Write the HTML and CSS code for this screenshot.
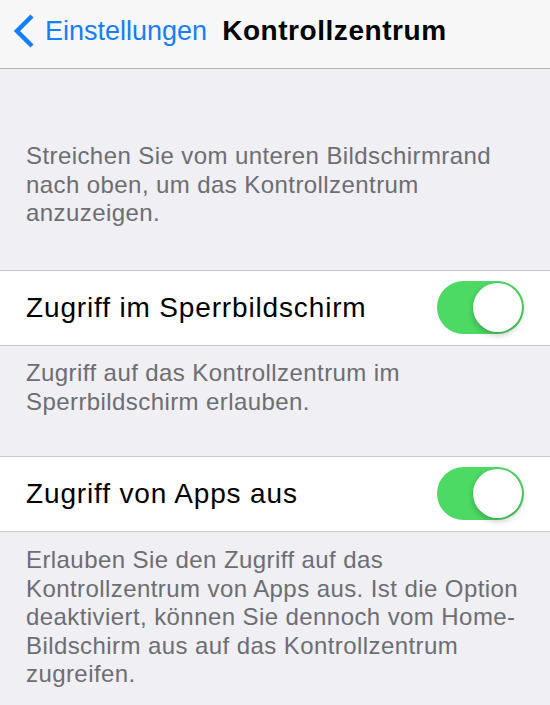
FILE: index.html
```html
<!DOCTYPE html>
<html lang="de">
<head>
<meta charset="utf-8">
<title>Kontrollzentrum</title>
<link rel="stylesheet" href="styles.css">
</head>
<body>
<div class="screen">
  <header class="nav">
    <a class="back" href="#">
      <svg class="chev" width="22" height="36" viewBox="0 0 22 36" aria-hidden="true">
        <polyline points="20,3 5,18 20,33" fill="none" stroke="#157efb" stroke-width="4.5" stroke-linejoin="miter" stroke-linecap="butt"/>
      </svg>
      <span class="back-label">Einstellungen</span>
    </a>
    <h1 class="title">Kontrollzentrum</h1>
  </header>
  <main class="content">
    <p class="note note-first">Streichen Sie vom unteren Bildschirmrand nach oben, um das Kontrollzentrum anzuzeigen.</p>
    <div class="cell">
      <span class="cell-label">Zugriff im Sperrbildschirm</span>
      <span class="switch"><span class="knob"></span></span>
    </div>
    <p class="note">Zugriff auf das Kontrollzentrum im Sperrbildschirm erlauben.</p>
    <div class="cell">
      <span class="cell-label">Zugriff von Apps aus</span>
      <span class="switch"><span class="knob"></span></span>
    </div>
    <p class="note note-last">Erlauben Sie den Zugriff auf das Kontrollzentrum von Apps aus. Ist die Option deaktiviert, können Sie dennoch vom Home-Bildschirm aus auf das Kontrollzentrum zugreifen.</p>
  </main>
</div>
</body>
</html>
```

FILE: styles.css
```css
* {
  box-sizing: content-box;
}

html, body {
  margin: 0;
  padding: 0;
  background: #efeff4;
}

body {
  font-family: "Liberation Sans", Arial, "Helvetica Neue", sans-serif;
  -webkit-font-smoothing: antialiased;
}

.screen {
  width: 550px;
  min-height: 705px;
  background: #efeff4;
}

.nav {
  display: flex;
  align-items: center;
  height: 62px;
  padding: 0 0 6px 12px;
  background: #f7f7f8;
  border-bottom: 1px solid #b4b4b8;
}

.back {
  display: flex;
  align-items: center;
  text-decoration: none;
  color: #157efb;
}

.chev {
  display: block;
  flex: none;
}

.back-label {
  margin-left: 11px;
  font-size: 27px;
  line-height: 27px;
  letter-spacing: 0;
  color: #157efb;
}

.title {
  margin: 0 0 0 15px;
  font-size: 28px;
  line-height: 28px;
  font-weight: bold;
  letter-spacing: 0.55px;
  color: #000;
}

.content {
  display: flex;
  flex-direction: column;
}

.note {
  margin: 0;
  padding: 13px 16px 40px 26px;
  font-size: 24px;
  line-height: 28.5px;
  letter-spacing: 0.42px;
  color: #6d6d72;
}

.note-first {
  padding-top: 73px;
  padding-bottom: 42.5px;
}

.note-last {
  padding-top: 14px;
  padding-bottom: 16px;
}

.cell {
  display: flex;
  align-items: center;
  justify-content: space-between;
  height: 74px;
  padding: 0 26px;
  background: #fff;
  border-top: 1px solid #c8c7cc;
  border-bottom: 1px solid #c8c7cc;
}

.cell-label {
  font-size: 28px;
  line-height: 28px;
  letter-spacing: 0.85px;
  color: #000;
}

.switch {
  position: relative;
  display: block;
  flex: none;
  width: 87px;
  height: 53px;
  margin-top: -2px;
  border-radius: 27px;
  background: #4cd964;
}

.knob {
  position: absolute;
  top: 2px;
  right: 2px;
  width: 49px;
  height: 49px;
  border-radius: 50%;
  background: #fff;
  box-shadow: 0 3px 6px rgba(0, 0, 0, 0.22), 0 0 0 0.5px rgba(0, 0, 0, 0.1);
}
```
